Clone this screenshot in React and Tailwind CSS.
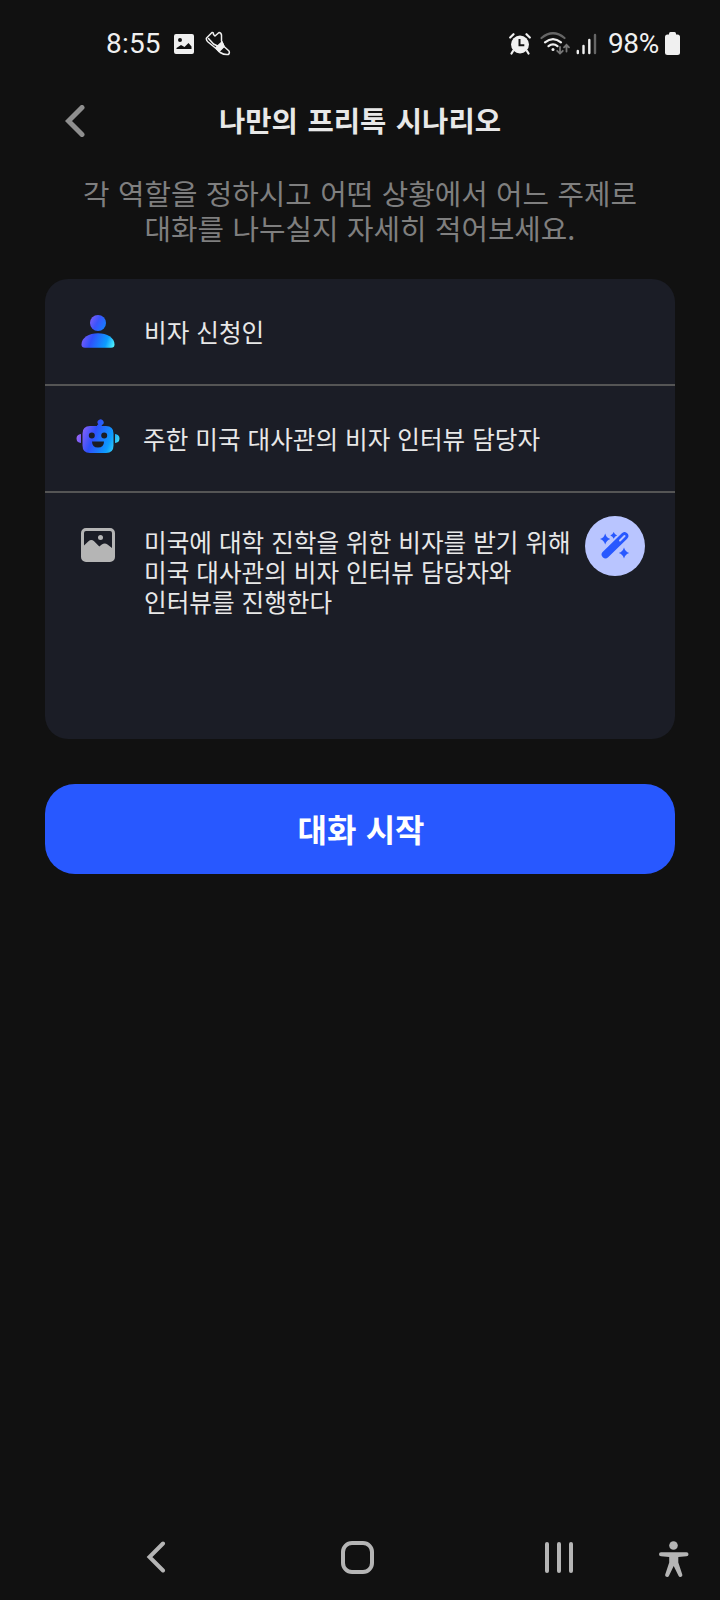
import React, { useState } from 'react';

function StatusBar() {
  return (
    <div className="flex h-[86px] items-center px-[39px] pl-[106px] pt-px text-[#f0f0f0] font-[Roboto,sans-serif] text-[28px] leading-8">
      <span className="w-[56px] whitespace-nowrap tracking-[0.2px]">8:55</span>

      {/* Notification icons */}
      <svg className="ml-[12px]" width="20" height="20" viewBox="0 0 20 20">
        <path
          fill="#f0f0f0"
          fillRule="evenodd"
          d="M2 0h16a2 2 0 0 1 2 2v16a2 2 0 0 1-2 2H2a2 2 0 0 1-2-2V2a2 2 0 0 1 2-2zM2.500 15h15v-2.500L14.500 9l-4 4-3.500-2-4.500 3zM6 4a2 2 0 1 0 0 4 2 2 0 0 0 0-4z"
        />
      </svg>
      <svg className="ml-[11px]" width="26" height="26" viewBox="0 0 26 26" fill="none" stroke="#f0f0f0" strokeWidth="1.500" strokeLinejoin="round" strokeLinecap="round">
        <path d="M1.500 7 7 1.500Q8.500 1 8.500 3.500l1.500 1.500 4-3.500Q16 1.500 16.500 4v6l2.500 5.500 5 4.500q1 2.500-.8 3.500-4 .5-8-2L11 17.500 3 11Q.8 9 1.500 7z" />
        <path d="M3.500 7.500 8.500 13l4 2" />
        <path d="M11 16.500 17 11l2 4.500-5 5z" fill="#f0f0f0" />
      </svg>

      <div className="ml-auto flex items-center">
        {/* Alarm */}
        <svg width="22" height="22" viewBox="0 0 22 22">
          <circle cx="11" cy="11.500" r="9" fill="#f0f0f0" />
          <path d="M1.200 4.500 4.500 1.200M20.800 4.500l-3.300-3.300M4 18l-1.500 2.500M18 18l1.500 2.500" stroke="#f0f0f0" strokeWidth="2.200" strokeLinecap="round" />
          <path d="M10.500 6v6.300h4.800" stroke="#111" strokeWidth="2" fill="none" />
        </svg>
        {/* Wifi */}
        <svg className="ml-[9px]" width="31" height="24" viewBox="0 0 31 24" fill="none" strokeLinecap="round">
          <path d="M1.500 6Q13-3.500 24.500 6" stroke="#666" strokeWidth="2.200" />
          <path d="M5 10.300q8-6.500 16 0M8.500 14.200q4.500-3.500 9 0" stroke="#f0f0f0" strokeWidth="2.200" />
          <circle cx="13" cy="17.500" r="1.500" fill="#f0f0f0" />
          <path d="M20 15v6.500m-2.800-2.700 2.800 2.800 2.800-2.800M26.500 19.500V13m-2.500 2.300 2.500-2.500 2.500 2.500" stroke="#777" strokeWidth="1.800" />
        </svg>
        {/* Signal */}
        <svg className="ml-[5px]" width="21" height="22" viewBox="0 0 21 22" strokeWidth="2.400" strokeLinecap="round">
          <path d="M1.800 18v2M7.500 13v7M13.300 7v13" stroke="#f0f0f0" />
          <path d="M19 2v18" stroke="#666" />
        </svg>
        <span className="ml-[11px] w-[54px] whitespace-nowrap tracking-[-0.4px]">98%</span>
        <svg className="ml-[3px] mt-px mr-px" width="15" height="24" viewBox="0 0 15 24" fill="#f0f0f0">
          <rect x="4" y="0" width="7" height="5" rx="1.500" />
          <rect x="0" y="2.500" width="15" height="20.500" rx="2.500" />
        </svg>
      </div>
    </div>
  );
}

function PersonIcon() {
  return (
    <svg width="34" height="34" viewBox="0 0 34 34">
      <defs>
        <linearGradient id="headFill" x1="9" y1="4" x2="25" y2="12" gradientUnits="userSpaceOnUse">
          <stop offset="0" stopColor="#7a5cf5" />
          <stop offset="0.45" stopColor="#3a54fb" />
          <stop offset="1" stopColor="#1380fd" />
        </linearGradient>
        <linearGradient id="bodyFill" x1="1" y1="22" x2="32" y2="33" gradientUnits="userSpaceOnUse">
          <stop offset="0" stopColor="#7a5cf5" />
          <stop offset="0.3" stopColor="#2f50fb" />
          <stop offset="0.75" stopColor="#0c9cfe" />
          <stop offset="1" stopColor="#4df0fb" />
        </linearGradient>
      </defs>
      <circle cx="17" cy="8" r="8" fill="url(#headFill)" />
      <path fill="url(#bodyFill)" d="M.5 29.500C.5 22.500 8 18.200 17 18.200s16.500 4.300 16.500 11.300q0 3.300-3.500 3.300H4Q.5 32.800.5 29.500z" />
    </svg>
  );
}

function RobotIcon() {
  return (
    <svg className="mb-[5px]" width="44" height="34" viewBox="0 0 44 34">
      <defs>
        <linearGradient id="robotFill" x1="1" y1="12" x2="41" y2="27" gradientUnits="userSpaceOnUse">
          <stop offset="0" stopColor="#a466f5" />
          <stop offset="0.4" stopColor="#2f50fb" />
          <stop offset="0.8" stopColor="#0c9cfe" />
          <stop offset="1" stopColor="#3fd8f5" />
        </linearGradient>
      </defs>
      <g fill="url(#robotFill)">
        <path d="M5 15v9Q.5 23.500.5 19.500T5 15zM39 15v9q4.500-.5 4.500-4.500T39 15z" />
        <path d="M20.500 8q.5-2 1.800-2.700A3 3 0 1 1 26 6l-1 2z" />
        <path
          fillRule="evenodd"
          d="M14 7h16q7.500 0 7.500 7.500v12Q37.500 34 30 34H14q-7.500 0-7.500-7.500v-12Q6.500 7 14 7zM15.800 13.500a3 3 0 1 0 0 6 3 3 0 0 0 0-6zM28.200 13.500a3 3 0 1 0 0 6 3 3 0 0 0 0-6zM16 22.500q0 6 6 6t6-6z"
        />
      </g>
    </svg>
  );
}

function PictureIcon() {
  return (
    <svg width="34" height="34" viewBox="0 0 34 34">
      <rect x="1.500" y="1.500" width="31" height="31" rx="3.500" fill="none" stroke="#b5b5b5" strokeWidth="3" />
      <path fill="#b5b5b5" d="M3 17.500 7.500 13.200q2.800-2.200 5.600 0l5.200 5.300 2.500-2q3-1.800 5.700 0L31 20v12H3z" />
      <circle cx="19.500" cy="9.500" r="2.500" fill="#b5b5b5" />
    </svg>
  );
}

function WandIcon() {
  return (
    <svg width="30" height="28" viewBox="0 0 30 28" fill="#2858ff">
      <path d="M5.500 22.500 24.500 4" stroke="#2858ff" strokeWidth="7.600" strokeLinecap="round" />
      <path d="m20 8.500 4.500-4.500" stroke="#b9c5ff" strokeWidth="2" strokeLinecap="round" />
      <path d="M5.200 1.500q1.300 4.500 5.200 5.500-3.900 1.300-5.200 5.500Q3.900 8.300 0 7q3.900-1 5.200-5.500zM13.700 0q.9 2.600 3.400 3.400-2.500.8-3.400 3.400-.9-2.600-3.400-3.400 2.500-.8 3.400-3.400zM24 15.500q1.300 4.200 5.200 5.500-3.900 1.300-5.200 5.500-1.300-4.200-5.200-5.500 3.900-1.300 5.200-5.500z" />
    </svg>
  );
}

function NavBar() {
  return (
    <div className="mt-auto flex h-[86px] items-center pl-[146px]">
      <svg width="20" height="32" viewBox="0 0 20 32" fill="none" stroke="#b5b5b5" strokeWidth="4" strokeLinecap="round" strokeLinejoin="miter">
        <path d="M17 2.500 3.500 16 17 29.500" />
      </svg>
      <div className="ml-[175px] h-[33px] w-[33px] rounded-[11px] border-4 border-[#b5b5b5]" />
      <div className="ml-[171px] flex gap-2">
        <div className="h-[31px] w-1 rounded-full bg-[#b5b5b5]" />
        <div className="h-[31px] w-1 rounded-full bg-[#b5b5b5]" />
        <div className="h-[31px] w-1 rounded-full bg-[#b5b5b5]" />
      </div>
      <svg className="ml-[86px] mt-[4px]" width="30" height="36" viewBox="0 0 30 36" fill="#b5b5b5">
        <circle cx="14.500" cy="4.500" r="4.300" />
        <path d="M2 11.200h25.500a1.900 1.900 0 0 1 0 4L19.300 16v5.500l3.900 11.800a2 2 0 0 1-3.700 1.500L14.700 25 10 34.800a2 2 0 0 1-3.700-1.500L10.200 21.500V16L2 15.200a1.900 1.900 0 0 1 0-4z" />
      </svg>
    </div>
  );
}

function App() {
  const [scenario] = useState({
    me: '비자 신청인',
    partner: '주한 미국 대사관의 비자 인터뷰 담당자',
    situation: [
      '미국에 대학 진학을 위한 비자를 받기 위해',
      '미국 대사관의 비자 인터뷰 담당자와',
      '인터뷰를 진행한다'
    ]
  });

  return (
    <div className="flex h-[1600px] w-[720px] flex-col overflow-hidden bg-[#111111] font-['Noto_Sans_CJK_KR',sans-serif] text-[#e8e8e8]">
      <StatusBar />

      {/* Header */}
      <header className="flex h-[70px] items-center pl-[65px]">
        <button type="button" className="-mt-px flex w-[20px]">
          <svg width="20" height="32" viewBox="0 0 20 32" fill="none" stroke="#8f8f8f" strokeWidth="5" strokeLinecap="round">
            <path d="M17 2.500 3.500 16 17 29.500" />
          </svg>
        </button>
        <h1 className="-mt-[2px] mr-[85px] flex-1 text-center text-[28.600px] font-bold leading-[40px] [word-spacing:3px]">나만의 프리톡 시나리오</h1>
      </header>

      <p className="mt-[19px] text-center text-[28.800px] leading-[35px] text-[#7f7f7f] [word-spacing:2px]">
        각 역할을 정하시고 어떤 상황에서 어느 주제로
        <br />
        대화를 나누실지 자세히 적어보세요.
      </p>

      {/* Scenario card */}
      <main className="mx-[45px] mt-[34px] h-[460px] shrink-0 overflow-hidden rounded-[23px] bg-[#1b1d26] text-[24.600px] leading-[30px] [word-spacing:1.500px]">
        <div className="flex h-[107px] items-center border-b-2 border-[#555555]">
          <div className="flex w-[105px] justify-center">
            <PersonIcon />
          </div>
          <span className="-ml-[6px] -mt-px">{scenario.me}</span>
        </div>
        <div className="flex h-[107px] items-center border-b-2 border-[#555555]">
          <div className="flex w-[105px] justify-center">
            <RobotIcon />
          </div>
          <span className="-ml-[7px] -mt-px">{scenario.partner}</span>
        </div>
        <div className="flex">
          <div className="flex w-[105px] justify-center pt-[35px]">
            <PictureIcon />
          </div>
          <p className="-ml-[6px] pt-[33px]">
            {scenario.situation.map((line) => (
              <span key={line} className="block whitespace-nowrap">{line}</span>
            ))}
          </p>
          <button type="button" className="ml-auto mr-[30px] mt-[23px] flex h-[60px] w-[60px] items-center justify-center rounded-full bg-[#b9c5ff]">
            <WandIcon />
          </button>
        </div>
      </main>

      <button
        type="button"
        className="mx-[45px] mt-[45px] h-[90px] shrink-0 rounded-[30px] bg-[#2858ff] pb-[2px] pl-[2px] text-[32px] font-bold text-white [word-spacing:2px]"
      >
        대화 시작
      </button>

      <NavBar />
    </div>
  );
}

export default App;
